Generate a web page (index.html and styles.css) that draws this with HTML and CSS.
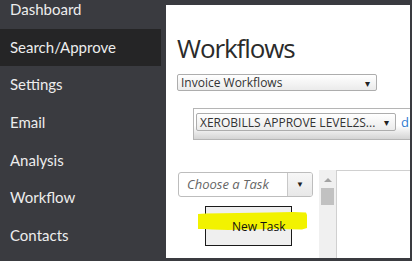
FILE: index.html
```html
<!DOCTYPE html>
<html>

<head>
    <title>Workflows</title>
    <link rel="stylesheet" href="styles.css">
</head>

<body>
    <div class="page">
        <ul class="sidenav">
            <li>Dashboard</li>
            <li class="active">Search/Approve</li>
            <li>Settings</li>
            <li>Email</li>
            <li>Analysis</li>
            <li>Workflow</li>
            <li>Contacts</li>
        </ul>

        <div class="main">
            <h1>Workflows</h1>

            <div class="select wide">
                <span>Invoice Workflows</span>
                <span class="caret">&#9662;</span>
            </div>

            <div class="panel">
                <div class="select">
                    <span>XEROBILLS APPROVE LEVEL2S...</span>
                    <span class="caret">&#9662;</span>
                </div>
                <a class="link">d</a>
            </div>

            <div class="task-row">
                <div class="task-col">
                    <div class="combo">
                        <span class="combo-text">Choose a Task</span>
                        <span class="combo-btn">&#9660;</span>
                    </div>
                    <div class="new-task">
                        <!-- marker highlight drawn on top of the screenshot -->
                        <svg class="marker" width="110" height="20" viewBox="0 0 110 20">
                            <path d="M0 2 L8 1.5 L40 1 L70 0.5 L95 0 L108 0.5 L109 3 L109 16 L104 17.5 L80 17 L50 17.5 L30 18 L14 17.5 L6 17 L0 17 Z" fill="#f2f200" />
                        </svg>
                        <span class="label">New Task</span>
                    </div>
                </div>
                <div class="scrollbar">
                    <span class="up"></span>
                    <span class="thumb"></span>
                </div>
                <div class="task-view"></div>
            </div>
        </div>
    </div>
</body>

</html>
```

FILE: styles.css
```css
body {
    margin: 0;
    background: #3a3b40;
    font-family: "Open Sans", "Liberation Sans", sans-serif;
}

.page {
    display: flex;
    height: 261px;
    overflow: hidden;
}

/* left menu */
.sidenav {
    list-style: none;
    margin: -9px 0 0 0;
    padding: 0;
    width: 166px;
    flex: none;
}

.sidenav li {
    width: 151px;
    height: 37.67px;
    line-height: 37.67px;
    padding-left: 10px;
    font-family: Lato, "Open Sans", sans-serif;
    font-size: 15px;
    color: #ededed;
}

.sidenav li.active {
    background: #252526;
}

/* white content area */
.main {
    margin-top: 5px;
    width: 244px;
    height: 253px;
    background: #fff;
    padding: 28px 0 0 11px;
    box-sizing: border-box;
    overflow: hidden;
    flex: none;
}

h1 {
    margin: 0;
    font-weight: normal;
    font-size: 26px;
    line-height: 30px;
    color: #2b2b2b;
    letter-spacing: -1.1px;
}

.select {
    display: flex;
    align-items: center;
    justify-content: space-between;
    width: 200px;
    height: 18px;
    box-sizing: border-box;
    border: 1px solid #adadad;
    border-radius: 2px;
    background: linear-gradient(#ffffff, #ebebeb);
    padding: 0 6px 0 3px;
    font-size: 12px;
    color: #333;
    white-space: nowrap;
}

.select.wide {
    margin-top: 11px;
    height: 17px;
}

.caret {
    font-size: 10px;
    color: #222;
}

.panel {
    display: flex;
    align-items: flex-start;
    gap: 5px;
    margin: 17px 0 0 16px;
    width: 260px;
    height: 32px;
    box-sizing: border-box;
    border: 1px solid #b5b5b5;
    background: linear-gradient(#ffffff 55%, #d4d4d4);
    padding: 4px 2px;
}

.link {
    color: #2f7bd0;
    font-size: 13px;
    line-height: 18px;
}

.task-row {
    display: flex;
    margin-top: 30px;
    height: 88px;
}

.task-col {
    width: 142px;
    flex: none;
    padding-top: 2px;
    padding-left: 1px;
    box-sizing: border-box;
}

.combo {
    display: flex;
    width: 135px;
    height: 25px;
    box-sizing: border-box;
    border: 1px solid #bdbdbd;
    border-radius: 3px;
    overflow: hidden;
}

.combo-text {
    flex: 1;
    padding-left: 8px;
    font-style: italic;
    font-size: 13px;
    line-height: 23px;
    color: #666;
}

.combo-btn {
    width: 24px;
    border-left: 1px solid #c8c8c8;
    background: linear-gradient(#f7f7f7, #e8e8e8);
    font-size: 8px;
    line-height: 22px;
    text-align: center;
    color: #222;
}

.new-task {
    position: relative;
    margin: 9px 0 0 27px;
    width: 87px;
    height: 40px;
    box-sizing: border-box;
    border: 1px solid #1a1a1a;
    background: #efefef;
    padding: 11px 0 0 26px;
    font-size: 12px;
    color: #111;
}

.marker {
    position: absolute;
    left: -8px;
    top: 5px;
}

.label {
    position: relative;
}

.scrollbar {
    width: 17px;
    flex: none;
    background: #f0f0f0;
    display: flex;
    flex-direction: column;
    align-items: center;
}

.up {
    margin-top: 8px;
    width: 0;
    height: 0;
    border-left: 4px solid transparent;
    border-right: 4px solid transparent;
    border-bottom: 4px solid #a3a3a3;
}

.thumb {
    margin-top: 6px;
    width: 13px;
    height: 17px;
    background: #c1c1c1;
}

.task-view {
    flex: 1;
    border-left: 1px solid #d0d0d0;
    border-top: 1px solid #d0d0d0;
}
```
